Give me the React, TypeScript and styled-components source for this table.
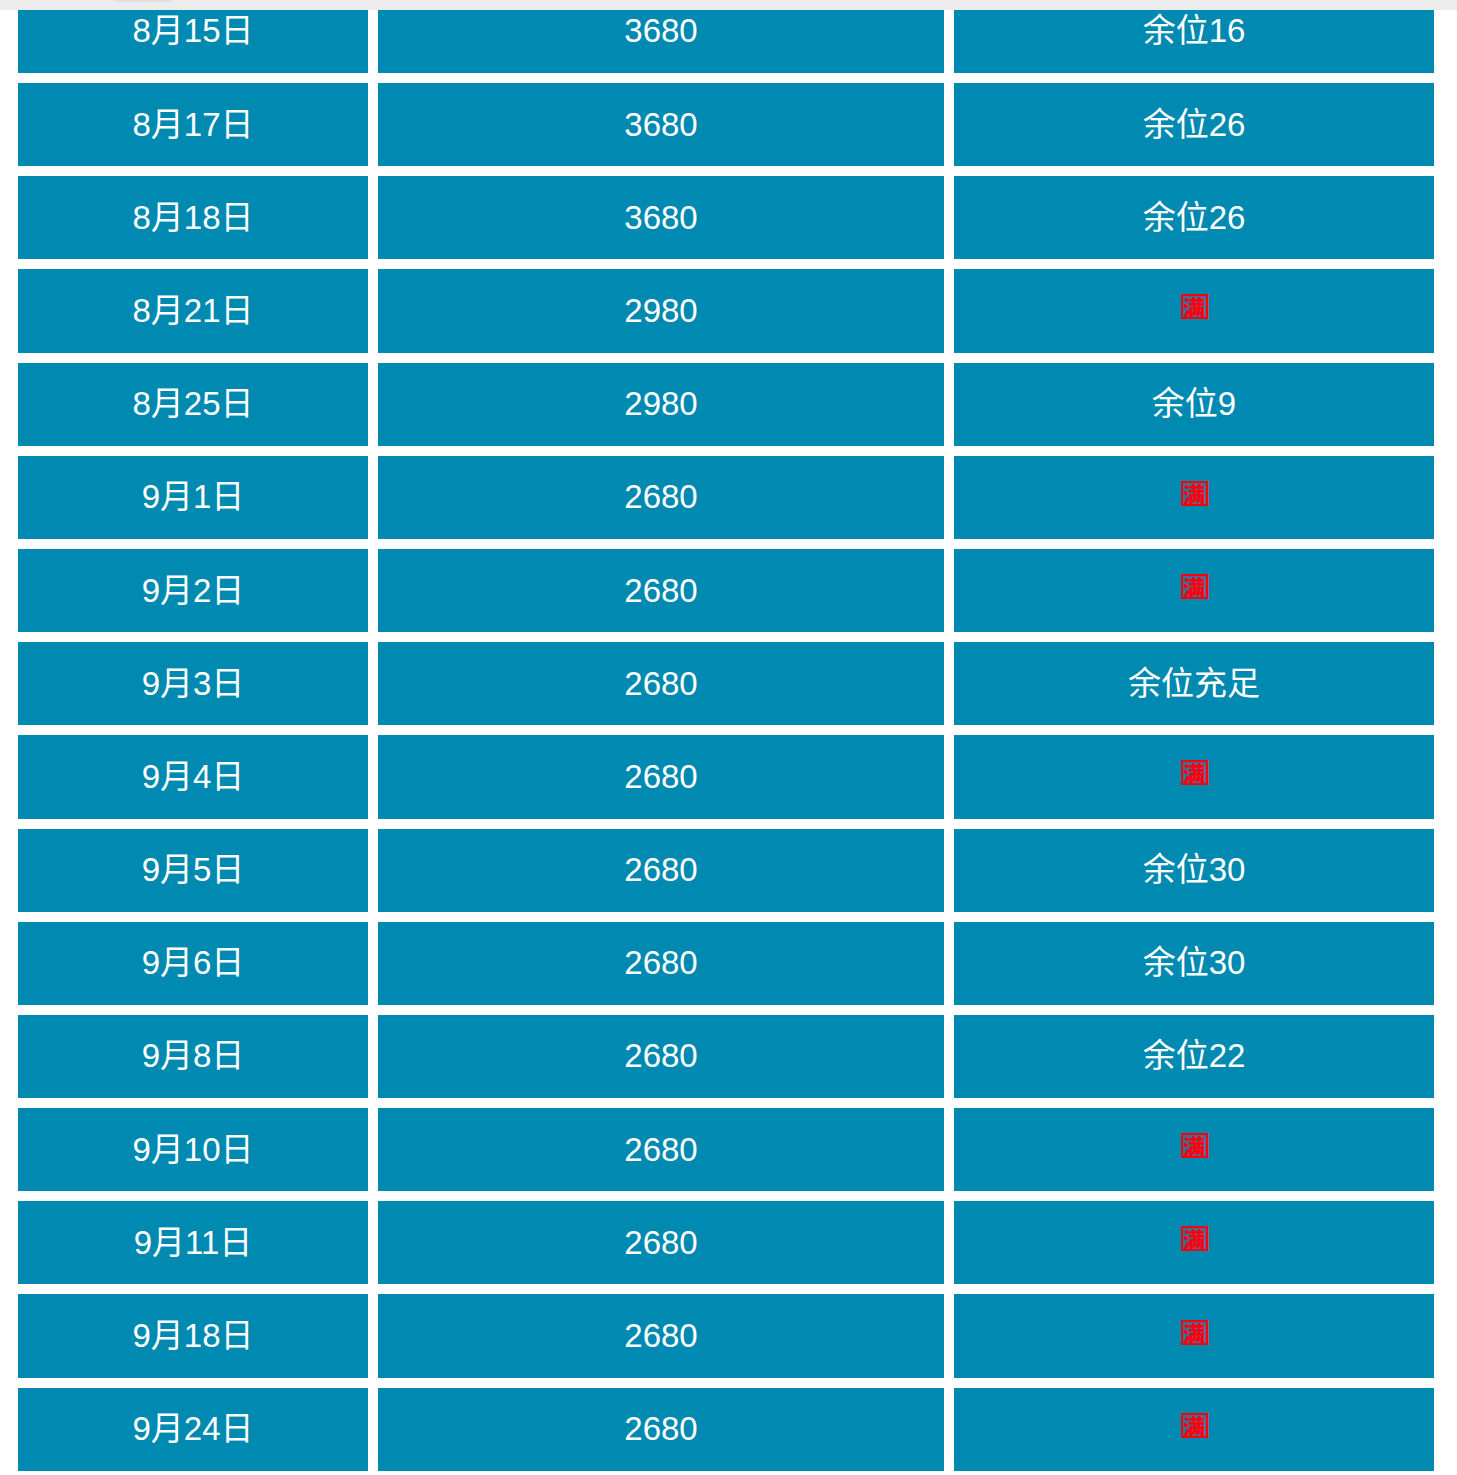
import React from "react";
import styled, { createGlobalStyle } from "styled-components";

const Global = createGlobalStyle`
  html, body { margin: 0; padding: 0; background: #ffffff; overflow: hidden; }
  body { font-family: "Liberation Sans", Arial, "Noto Sans CJK SC", sans-serif; }
`;

const Page = styled.div`
  position: relative;
  width: 1457px;
  height: 1475px;
  overflow: hidden;
  background: #ffffff;
`;

const TopBar = styled.div`
  position: absolute;
  left: 0;
  top: 0;
  width: 100%;
  height: 10px;
  background: #ececec;
  z-index: 2;
`;

const Thumb = styled.div`
  position: absolute;
  left: 114px;
  top: 0;
  width: 59px;
  height: 2px;
  background: #e1e1e1;
  border-radius: 0 0 4px 4px;
`;

const Table = styled.div`
  display: grid;
  grid-template-columns: 350px 566px 480px;
  grid-auto-rows: 83.2px;
  column-gap: 10px;
  row-gap: 10px;
  padding-left: 18px;
  margin-top: -10.2px;
`;

const Cell = styled.div`
  background: #008ab1;
  color: #ffffff;
  font-size: 33px;
  line-height: 38px;
  display: flex;
  align-items: center;
  justify-content: center;
  font-family: "Liberation Sans", Arial, "Noto Sans CJK SC", sans-serif;
`;

const FullMark = styled.span`
  display: inline-flex;
  align-items: center;
  justify-content: center;
  box-sizing: border-box;
  width: 27px;
  height: 25px;
  background: #3b6f9a;
  border: 2px solid #ff0000;
  box-shadow: 1px 0 0 #b05a90;
  color: #ff0010;
  font-size: 22px;
  line-height: 21px;
  font-family: "Noto Sans CJK SC", sans-serif;
  font-weight: 900;
  margin-top: -8px;
`;

type Row = { date: string; price: string; seats: string | null };

const rows: Row[] = [
  { date: "8月15日", price: "3680", seats: "余位16" },
  { date: "8月17日", price: "3680", seats: "余位26" },
  { date: "8月18日", price: "3680", seats: "余位26" },
  { date: "8月21日", price: "2980", seats: null },
  { date: "8月25日", price: "2980", seats: "余位9" },
  { date: "9月1日", price: "2680", seats: null },
  { date: "9月2日", price: "2680", seats: null },
  { date: "9月3日", price: "2680", seats: "余位充足" },
  { date: "9月4日", price: "2680", seats: null },
  { date: "9月5日", price: "2680", seats: "余位30" },
  { date: "9月6日", price: "2680", seats: "余位30" },
  { date: "9月8日", price: "2680", seats: "余位22" },
  { date: "9月10日", price: "2680", seats: null },
  { date: "9月11日", price: "2680", seats: null },
  { date: "9月18日", price: "2680", seats: null },
  { date: "9月24日", price: "2680", seats: null },
];

export default function App() {
  return (
    <Page>
      <Global />
      <TopBar>
        <Thumb />
      </TopBar>
      <Table>
        {rows.map((r) => (
          <React.Fragment key={r.date}>
            <Cell>{r.date}</Cell>
            <Cell>{r.price}</Cell>
            <Cell>{r.seats ?? <FullMark>满</FullMark>}</Cell>
          </React.Fragment>
        ))}
      </Table>
    </Page>
  );
}
